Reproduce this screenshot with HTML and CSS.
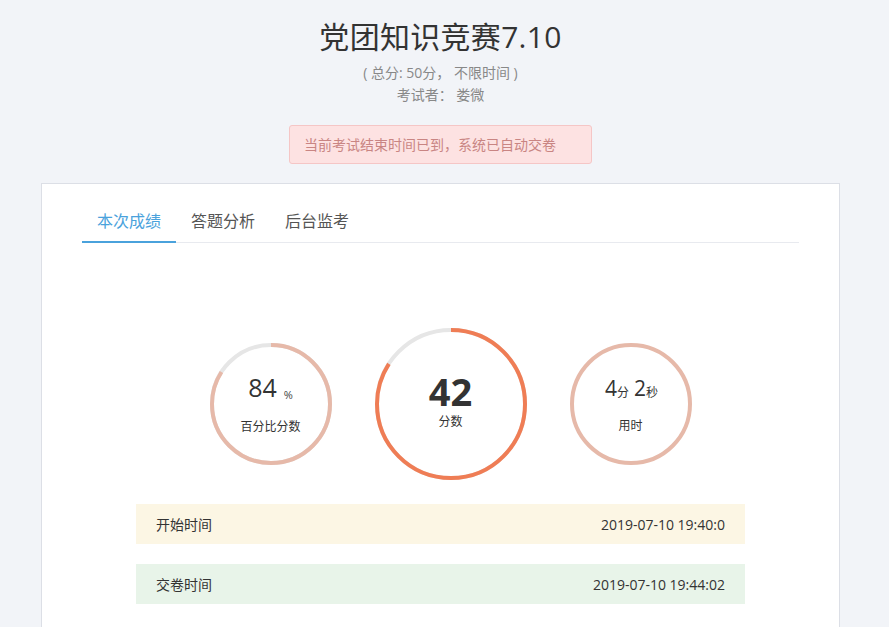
FILE: index.html
```html
<!DOCTYPE html>
<html lang="zh-CN">
<head>
<meta charset="utf-8">
<title>党团知识竞赛7.10</title>
<link rel="stylesheet" href="styles.css">
</head>
<body>
<div class="page">
  <header class="head">
    <h1 class="title">党团知识竞赛7.10</h1>
    <div class="sub">( 总分: 50分， 不限时间 )</div>
    <div class="sub examinee">考试者： 娄微</div>
    <div class="alert">当前考试结束时间已到，系统已自动交卷</div>
  </header>

  <section class="card">
    <nav class="tabs">
      <div class="tab active">本次成绩</div>
      <div class="tab">答题分析</div>
      <div class="tab">后台监考</div>
    </nav>

    <div class="rings">
      <div class="ring small">
        <svg width="122" height="122" viewBox="0 0 122 122">
          <circle class="track" cx="61" cy="61" r="59"/>
          <circle class="bar salmon" cx="61" cy="61" r="59" stroke-dasharray="311.4 400" transform="rotate(-90 61 61)"/>
        </svg>
        <div class="ring-text">
          <div class="val"><span class="num">84</span><span class="pct">%</span></div>
          <div class="label">百分比分数</div>
        </div>
      </div>

      <div class="ring big">
        <svg width="152" height="152" viewBox="0 0 152 152">
          <circle class="track" cx="76" cy="76" r="74"/>
          <circle class="bar orange" cx="76" cy="76" r="74" stroke-dasharray="390.6 500" transform="rotate(-90 76 76)"/>
        </svg>
        <div class="ring-text">
          <div class="score">42</div>
          <div class="label">分数</div>
        </div>
      </div>

      <div class="ring small">
        <svg width="122" height="122" viewBox="0 0 122 122">
          <circle class="bar salmon" cx="61" cy="61" r="59"/>
        </svg>
        <div class="ring-text">
          <div class="val time"><span class="tnum">4</span><span class="unit">分</span><span class="tnum gapl">2</span><span class="unit">秒</span></div>
          <div class="label">用时</div>
        </div>
      </div>
    </div>

    <div class="rows">
      <div class="row start"><span>开始时间</span><span>2019-07-10 19:40:0</span></div>
      <div class="row submit"><span>交卷时间</span><span>2019-07-10 19:44:02</span></div>
    </div>
  </section>
</div>
</body>
</html>
```

FILE: styles.css
```css
* { box-sizing: border-box; margin: 0; padding: 0; }
html, body { height: 100%; }
body {
  background: #f2f4f8;
  font-family: "Open Sans", "Noto Sans CJK SC", sans-serif;
  color: #333;
  overflow: hidden;
}
.page { padding-top: 16px; width: 881px; }
.head { display: flex; flex-direction: column; align-items: center; }
.title {
  font-family: "Open Sans", "Noto Sans CJK SC", sans-serif;
  font-weight: 400;
  font-size: 30px;
  line-height: 42px;
  color: #333;
  letter-spacing: 0.3px;
}
.sub {
  font-size: 14px;
  line-height: 22px;
  color: #888;
}
.title + .sub { margin-top: 4px; }
.alert {
  margin-top: 19px;
  width: 303px;
  height: 39px;
  background: #fde2e2;
  border: 1px solid #f5c6c6;
  border-radius: 3px;
  color: #c98583;
  font-size: 14px;
  line-height: 37px;
  padding-left: 14px;
}
.card {
  margin: 19px 41px 0 41px;
  background: #fff;
  border: 1px solid #dcdfe6;
  height: 460px;
  padding: 17px 40px 0 40px;
}
.tabs {
  display: flex;
  border-bottom: 1px solid #e8eaef;
}
.tab {
  font-size: 16px;
  line-height: 40px;
  padding: 0 15px;
  color: #555;
  margin-bottom: -1px;
  border-bottom: 2px solid transparent;
}
.tab.active { color: #4aa2dc; border-bottom-color: #4aa2dc; }

.rings {
  display: flex;
  justify-content: center;
  align-items: center;
  gap: 43px;
  padding-left: 20px;
  margin-top: 85px;
}
.ring { position: relative; display: flex; }
.ring svg { display: block; }
.track { fill: none; stroke: #e6e6e6; stroke-width: 4; }
.bar { fill: none; stroke-width: 4; }
.salmon { stroke: #e6b9a9; }
.orange { stroke: #ef7d55; }
.ring-text {
  position: absolute;
  inset: 0;
  display: flex;
  flex-direction: column;
  align-items: center;
  justify-content: center;
}
.val { display: flex; align-items: baseline; line-height: 30px; }
.num { font-size: 25px; color: #333; }
.pct { font-size: 11px; margin-left: 7px; position: relative; top: 2px; color: #444; }
.label { font-size: 12px; color: #333; line-height: 18px; margin-top: 10px; }
.big .label { margin-top: 0; }
.score { font-size: 38px; font-weight: 700; line-height: 44px; color: #333; margin-top: -8px; }
.time { margin-left: 2px; }
.tnum { font-size: 21px; color: #333; }
.unit { font-size: 12px; color: #333; position: relative; top: 1px; }
.gapl { margin-left: 5px; }

.rows {
  margin: 24px 54px 0 54px;
  display: flex;
  flex-direction: column;
  gap: 20px;
}
.row {
  height: 40px;
  display: flex;
  justify-content: space-between;
  align-items: center;
  padding: 0 20px;
  font-size: 14px;
  color: #333;
}
.row.start { background: #fcf6e4; }
.row.submit { background: #e8f4e9; }
```
